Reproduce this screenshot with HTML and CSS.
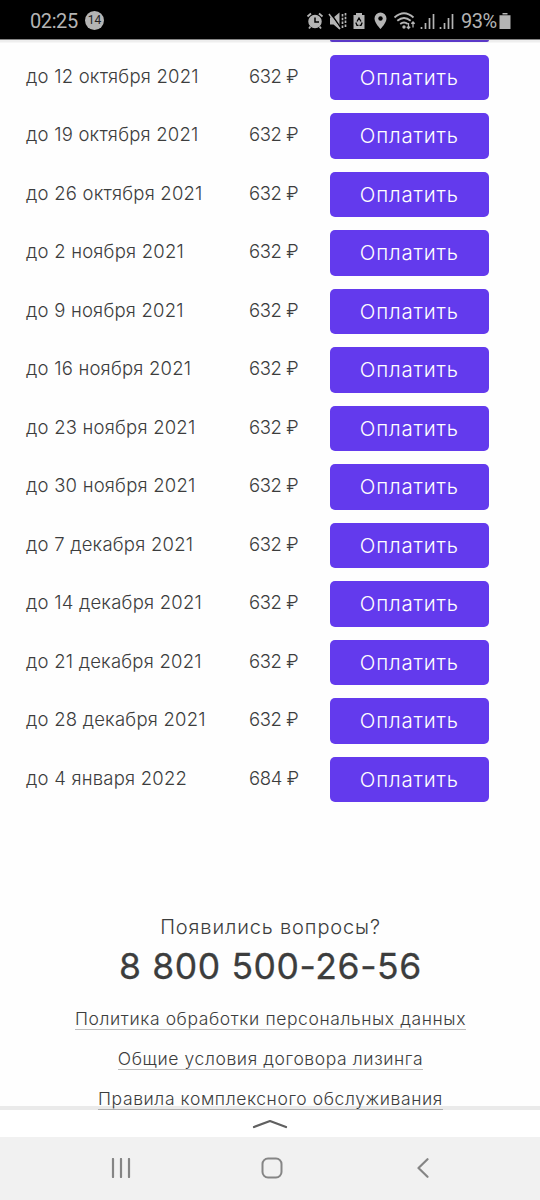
FILE: index.html
```html
<!DOCTYPE html>
<html lang="ru">
<head>
<meta charset="utf-8">
<title>График платежей</title>
<link rel="stylesheet" href="styles.css">
</head>
<body>
<div class="screen">
  <header class="status">
    <span class="time">02:25</span><span class="count">14</span>
    <svg class="status-icons" width="154" height="24" viewBox="0 0 154 24" fill="none" stroke="#b4b4b4" stroke-width="1.5">
      <circle cx="9" cy="12.500" r="6" fill="#b4b4b4"/><path d="M9 8.500v4.500h4" stroke="#000"/><path d="M1.500 7.500L5 4.500M13 4.500l3.500 3M4.500 17.500l-1.500 2M13.500 17.500l1.500 2" stroke-width="1.800"/>
      <path d="M24 8.500h3.500l6-5v17l-6-5H24z" fill="#b4b4b4" stroke="none"/><path d="M24.500 4l11 16" stroke="#000" stroke-width="1.500"/><path d="M23 5l11 15" stroke-width="1.500"/><path d="M36.500 5v14M39.500 4v15" stroke-width="1.700" stroke-dasharray="2.500 1.300"/>
      <path d="M50 4h6v2h2.500v14h-11V6H50z" fill="#b4b4b4" stroke="none"/><path d="M51 12.500l2-3.500 2 3.500M49.800 13.500l1.200 2.800h1.500M56.200 13.500L55 16.300h-1.500" stroke="#000" stroke-width="1.300"/>
      <path d="M74.500 3.500a6 6 0 0 0-6 6C68.500 14 74.500 20 74.500 20s6-6 6-10.500a6 6 0 0 0-6-6z" fill="#b4b4b4" stroke="none"/><circle cx="74.500" cy="9.500" r="2.200" fill="#000" stroke="none"/>
      <path d="M88.500 8.500q9.500-8.500 19 0M91.300 11.800q6.700-5.500 13.400 0M94.200 15q3.800-3 7.600 0" stroke-width="1.800"/><circle cx="98" cy="18" r="1.700" fill="#b4b4b4" stroke="none"/><path d="M102.500 14v5.500M100.800 17.800l1.700 1.700 1.700-1.700M107 18.500V13M105.300 14.700L107 13l1.700 1.700" stroke-width="1.300"/>
      <path d="M115.500 20v-2M119.500 20v-6M123.500 20V9M127.500 20V5M134.500 20v-2M138.500 20v-6M142.500 20V9M146.500 20V5" stroke-width="1.700"/>
    </svg>
    <span class="percent">93%</span>
    <svg class="battery" width="12" height="16" viewBox="0 0 12 16"><path d="M3.500 0h5v1.500h-5zM.5 2.200h11V16H.5z" fill="#b4b4b4"/></svg>
  </header>
  <main class="page">
    <div class="previous"></div>
    <ul class="payments">
      <li class="row"><span class="date">до 12 октября 2021</span><span class="sum">632 ₽</span><button class="pay">Оплатить</button></li>
      <li class="row"><span class="date">до 19 октября 2021</span><span class="sum">632 ₽</span><button class="pay">Оплатить</button></li>
      <li class="row"><span class="date">до 26 октября 2021</span><span class="sum">632 ₽</span><button class="pay">Оплатить</button></li>
      <li class="row"><span class="date">до 2 ноября 2021</span><span class="sum">632 ₽</span><button class="pay">Оплатить</button></li>
      <li class="row"><span class="date">до 9 ноября 2021</span><span class="sum">632 ₽</span><button class="pay">Оплатить</button></li>
      <li class="row"><span class="date">до 16 ноября 2021</span><span class="sum">632 ₽</span><button class="pay">Оплатить</button></li>
      <li class="row"><span class="date">до 23 ноября 2021</span><span class="sum">632 ₽</span><button class="pay">Оплатить</button></li>
      <li class="row"><span class="date">до 30 ноября 2021</span><span class="sum">632 ₽</span><button class="pay">Оплатить</button></li>
      <li class="row"><span class="date">до 7 декабря 2021</span><span class="sum">632 ₽</span><button class="pay">Оплатить</button></li>
      <li class="row"><span class="date">до 14 декабря 2021</span><span class="sum">632 ₽</span><button class="pay">Оплатить</button></li>
      <li class="row"><span class="date">до 21 декабря 2021</span><span class="sum">632 ₽</span><button class="pay">Оплатить</button></li>
      <li class="row"><span class="date">до 28 декабря 2021</span><span class="sum">632 ₽</span><button class="pay">Оплатить</button></li>
      <li class="row"><span class="date">до 4 января 2022</span><span class="sum">684 ₽</span><button class="pay">Оплатить</button></li>
    </ul>
    <section class="contacts">
      <p class="question">Появились вопросы?</p>
      <p class="phone">8 800 500-26-56</p>
      <a class="link link-policy">Политика обработки персональных данных</a>
      <a class="link link-terms">Общие условия договора лизинга</a>
      <a class="link link-rules">Правила комплексного обслуживания</a>
    </section>
  </main>
  <div class="drawer"><svg width="36" height="10" viewBox="0 0 36 10"><path d="M2 8L18 2l16 6" fill="none" stroke="#606060" stroke-width="2.200" stroke-linecap="round" stroke-linejoin="round"/></svg></div>
  <nav class="navbar">
    <svg width="20" height="20" viewBox="0 0 20 20"><path d="M2 1v18M10 1v18M18 1v18" stroke="#858585" stroke-width="2.200" stroke-linecap="round"/></svg>
    <svg class="home" width="22" height="22" viewBox="0 0 22 22"><rect x="1.500" y="1.500" width="19" height="19" rx="5.500" fill="none" stroke="#858585" stroke-width="2"/></svg>
    <svg width="12" height="20" viewBox="0 0 12 20"><path d="M10.500 1.200L1.500 10l9 8.800" fill="none" stroke="#858585" stroke-width="2.200" stroke-linecap="round" stroke-linejoin="round"/></svg>
  </nav>
</div>
</body>
</html>
```
FILE: styles.css
```css
* { box-sizing: border-box; }
body { margin: 0; background: #fefefe; color: #3c3d3d; font-family: Inter, "Open Sans", sans-serif; }
.screen { width: 540px; height: 1200px; display: flex; flex-direction: column; overflow: hidden; }
.status { height: 39px; flex: none; background: #000; color: #b4b4b4; display: flex; align-items: center; padding: 2px 28px 0 30px; font-family: Roboto, sans-serif; }
.time { font-size: 20px; width: 49px; letter-spacing: -0.4px; }
.count { width: 19px; height: 19px; margin-left: 6px; border-radius: 50%; background: #b4b4b4; color: #222; font-size: 12px; line-height: 19px; text-align: center; }
.status-icons { margin-left: 202px; flex: none; }
.percent { font-size: 20px; width: 38px; letter-spacing: -0.5px; margin-left: 1px; }
.battery { flex: none; }
.page { flex: 1; min-height: 0; overflow: hidden; border-top: 1px solid #858585; background: linear-gradient(#eee 0 2px, #fefefe 3px); }
.previous { height: 2px; margin: 0 51px 0 330px; background: #5a38c8; border-radius: 0 0 5px 5px; }
.payments { margin: 12.7px 0 0; padding: 0; list-style: none; display: flex; flex-direction: column; gap: 13px; }
.row { height: 45.5px; display: grid; grid-template-columns: 223px 81px 158.600px; padding-left: 26px; white-space: nowrap; font-size: 18.500px; font-weight: 300; line-height: 42px; }
.date { letter-spacing: 0.22px; }
.sum { letter-spacing: -0.4px; }
.pay { border: 0; border-radius: 5px; background: #633aed; color: #fff; font: 300 20.500px/45px Inter, sans-serif; padding: 0; letter-spacing: 0.85px; }
.contacts { margin-top: 111.3px; padding-left: 1px; display: flex; flex-direction: column; align-items: center; white-space: nowrap; }
.question { margin: 0; font-size: 20px; line-height: 28px; font-weight: 300; letter-spacing: 0.87px; }
.phone { margin: 0; font-size: 35.500px; line-height: 51px; font-weight: 400; letter-spacing: 0.6px; -webkit-text-stroke: 0.3px; }
.link { height: 24px; line-height: 25px; font-size: 17.500px; font-weight: 300; border-bottom: 1px solid #bdbdbd; margin-bottom: 15.6px; letter-spacing: 0.6px; }
.link-policy { margin-top: 14px; }
/* The translucent top edge overlaps the last line of the page. */
.drawer { position: relative; height: 31px; flex: none; margin-top: -4px; border-top: 4px solid rgba(0, 0, 0, 0.08); background: #fff; background-clip: padding-box; display: flex; justify-content: center; padding-top: 9px; }
.navbar { height: 63px; flex: none; background: #f1f1f1; display: flex; justify-content: space-between; align-items: center; padding: 0 111px 2px; }
.home { margin-right: 4px; }
```
